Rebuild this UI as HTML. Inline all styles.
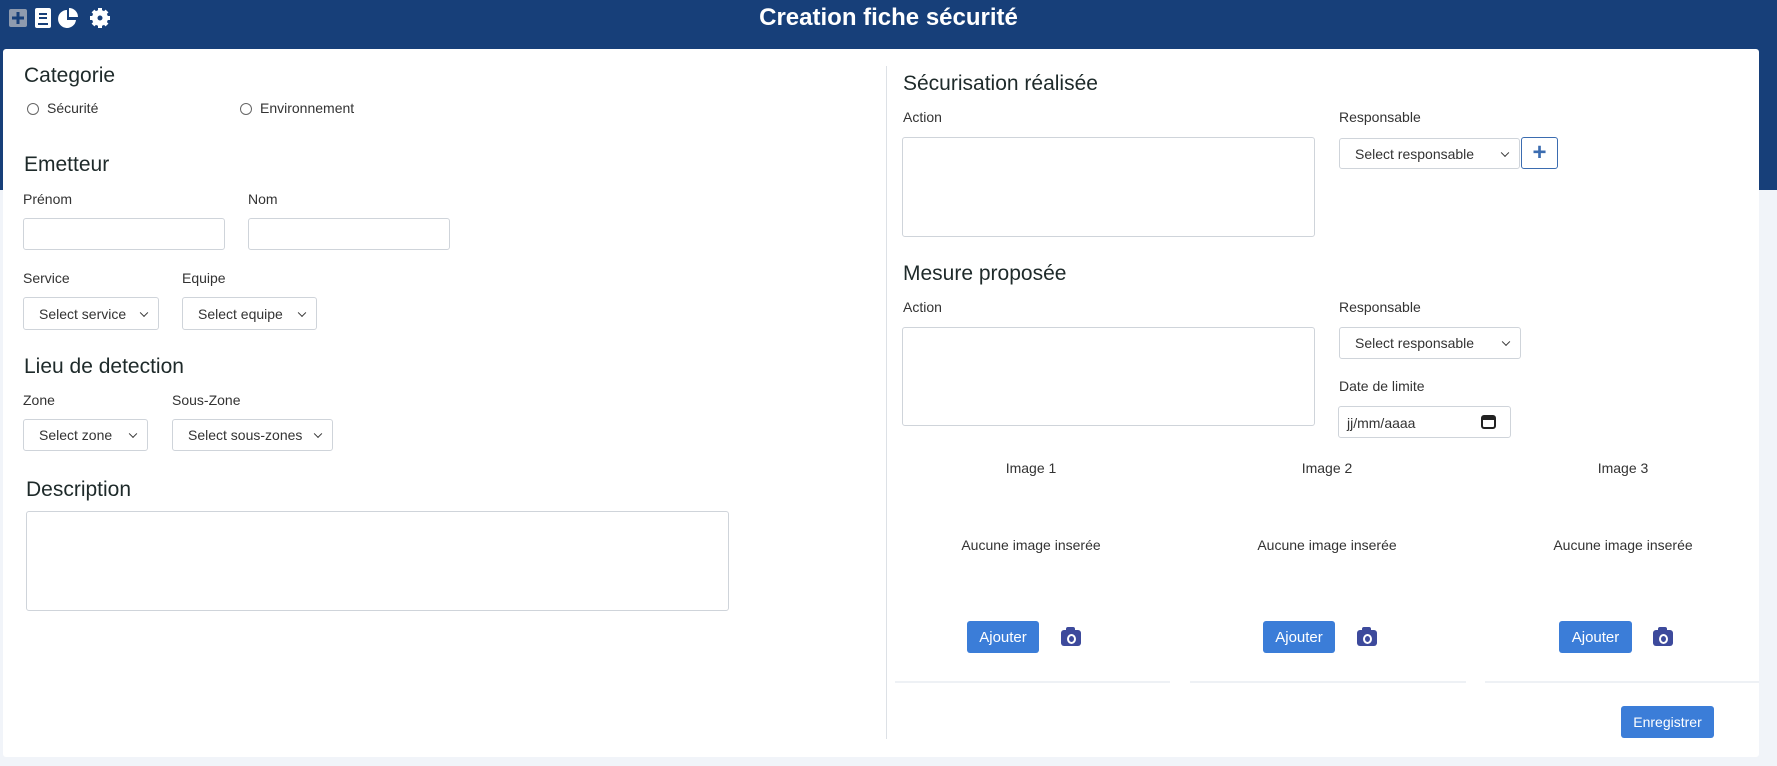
<!DOCTYPE html>
<html><head><meta charset="utf-8"><style>
*{box-sizing:border-box;margin:0;padding:0}
body{width:1777px;height:766px;background:#f1f4f9;font-family:"Liberation Sans",sans-serif;color:#212529;position:relative;overflow:hidden}
.hdr{position:absolute;left:0;top:0;width:1777px;height:190px;background:#173f79}
.title{position:absolute;left:0;width:1777px;top:4px;text-align:center;color:#fff;font-size:24px;font-weight:bold}
.card{position:absolute;left:3px;top:49px;width:1756px;height:708px;background:#fff;border-radius:3px}
.a{position:absolute;white-space:nowrap}
h2{position:absolute;font-size:21px;font-weight:normal;color:#1e2a2a;white-space:nowrap}
.lb{position:absolute;font-size:14px;color:#333;white-space:nowrap}
.in{position:absolute;border:1px solid #cfd4da;border-radius:3px;background:#fff}
.sel{position:absolute;border:1px solid #cfd4da;border-radius:3px;background:#fff;font-size:14px;color:#333;padding-left:15px;display:flex;align-items:center}
.sel:after{content:"";position:absolute;right:11px;top:50%;width:5px;height:5px;border-right:1.5px solid #333;border-bottom:1.5px solid #333;transform:translateY(-70%) rotate(45deg)}
.radio{position:absolute;width:12px;height:12px;border:1px solid #666;border-radius:50%}
.btn{position:absolute;background:#3b7dd8;color:#fff;font-size:15px;border-radius:3px;display:flex;align-items:center;justify-content:center}
.cam{position:absolute;width:20px;height:16px;background:#3d4a9c;border-radius:3px}
.cam:before{content:"";position:absolute;left:5px;top:-3px;width:9px;height:4px;background:#3d4a9c;border-radius:2px 2px 0 0}
.cam:after{content:"";position:absolute;left:6px;top:4px;width:5px;height:6px;border:2px solid #fff;border-radius:50%}
.sep{position:absolute;top:681px;height:2px;background:#eef1f5}
.ctr{position:absolute;text-align:center;font-size:14px;color:#333}
</style></head><body>
<div class="hdr"></div>
<div class="title">Creation fiche sécurité</div>
<svg class="a" style="left:8px;top:7px" width="105" height="22" viewBox="0 0 105 22">
<rect x="1" y="2" width="18" height="18" rx="2" fill="#8e9aae"/><path d="M10 5v12M4 11h12" stroke="#173f79" stroke-width="3"/>
<rect x="27" y="1" width="16" height="20" rx="2" fill="#fff"/><path d="M31 7h8M31 11h8M30 17h10" stroke="#173f79" stroke-width="2"/>
<path d="M59 3a9 9 0 1 0 9 10h-9z" fill="#fff"/><path d="M61 1a9 9 0 0 1 9 9h-9z" fill="#fff"/>
<circle cx="92" cy="11" r="6" fill="none" stroke="#fff" stroke-width="4"/><path d="M92 1v20M82 11h20M85 4l14 14M99 4L85 18" stroke="#fff" stroke-width="4"/><circle cx="92" cy="11" r="2.5" fill="#173f79"/>
</svg>
<div class="card"></div>
<h2 style="left:24px;top:64px">Categorie</h2>
<div class="radio" style="left:27px;top:103px"></div><div class="lb" style="left:47px;top:100px">Sécurité</div>
<div class="radio" style="left:240px;top:103px"></div><div class="lb" style="left:260px;top:100px">Environnement</div>
<h2 style="left:24px;top:153px">Emetteur</h2>
<div class="lb" style="left:23px;top:191px">Prénom</div><div class="lb" style="left:248px;top:191px">Nom</div>
<div class="in" style="left:23px;top:218px;width:202px;height:32px"></div>
<div class="in" style="left:248px;top:218px;width:202px;height:32px"></div>
<div class="lb" style="left:23px;top:270px">Service</div><div class="lb" style="left:182px;top:270px">Equipe</div>
<div class="sel" style="left:23px;top:297px;width:136px;height:33px">Select service</div>
<div class="sel" style="left:182px;top:297px;width:135px;height:33px">Select equipe</div>
<h2 style="left:24px;top:355px">Lieu de detection</h2>
<div class="lb" style="left:23px;top:392px">Zone</div><div class="lb" style="left:172px;top:392px">Sous-Zone</div>
<div class="sel" style="left:23px;top:419px;width:125px;height:32px">Select zone</div>
<div class="sel" style="left:172px;top:419px;width:161px;height:32px">Select sous-zones</div>
<h2 style="left:26px;top:478px">Description</h2>
<div class="in" style="left:26px;top:511px;width:703px;height:100px"></div>
<div class="a" style="left:886px;top:66px;width:1px;height:673px;background:#dde1e6"></div>
<h2 style="left:903px;top:72px">Sécurisation réalisée</h2>
<div class="lb" style="left:903px;top:109px">Action</div><div class="lb" style="left:1339px;top:109px">Responsable</div>
<div class="in" style="left:902px;top:137px;width:413px;height:100px"></div>
<div class="sel" style="left:1339px;top:138px;width:181px;height:31px">Select responsable</div>
<div class="a" style="left:1521px;top:137px;width:37px;height:32px;border:1px solid #3b6cb0;border-radius:3px;color:#3b6cb0;font-size:24px;font-weight:bold;text-align:center;line-height:29px">+</div>
<h2 style="left:903px;top:262px">Mesure proposée</h2>
<div class="lb" style="left:903px;top:299px">Action</div><div class="lb" style="left:1339px;top:299px">Responsable</div>
<div class="in" style="left:902px;top:327px;width:413px;height:99px"></div>
<div class="sel" style="left:1339px;top:327px;width:182px;height:32px">Select responsable</div>
<div class="lb" style="left:1339px;top:378px">Date de limite</div>
<div class="in" style="left:1338px;top:406px;width:173px;height:32px;font-size:14px;color:#333;padding:8px 0 0 8px">jj/mm/aaaa</div>
<svg class="a" style="left:1481px;top:413px" width="15" height="16"><rect x="1" y="3" width="13" height="12" rx="2" fill="none" stroke="#222" stroke-width="2"/><rect x="1" y="3" width="13" height="4" fill="#222"/></svg>
<div class="ctr" style="left:931px;width:200px;top:460px">Image 1</div>
<div class="ctr" style="left:1227px;width:200px;top:460px">Image 2</div>
<div class="ctr" style="left:1523px;width:200px;top:460px">Image 3</div>
<div class="ctr" style="left:931px;width:200px;top:537px">Aucune image inserée</div>
<div class="ctr" style="left:1227px;width:200px;top:537px">Aucune image inserée</div>
<div class="ctr" style="left:1523px;width:200px;top:537px">Aucune image inserée</div>
<div class="btn" style="left:967px;top:621px;width:72px;height:32px">Ajouter</div><div class="cam" style="left:1061px;top:630px"></div>
<div class="btn" style="left:1263px;top:621px;width:72px;height:32px">Ajouter</div><div class="cam" style="left:1357px;top:630px"></div>
<div class="btn" style="left:1559px;top:621px;width:73px;height:32px">Ajouter</div><div class="cam" style="left:1653px;top:630px"></div>
<div class="sep" style="left:895px;width:275px"></div>
<div class="sep" style="left:1190px;width:276px"></div>
<div class="sep" style="left:1485px;width:274px"></div>
<div class="btn" style="left:1621px;top:706px;width:93px;height:32px;font-size:14px">Enregistrer</div>
</body></html>
